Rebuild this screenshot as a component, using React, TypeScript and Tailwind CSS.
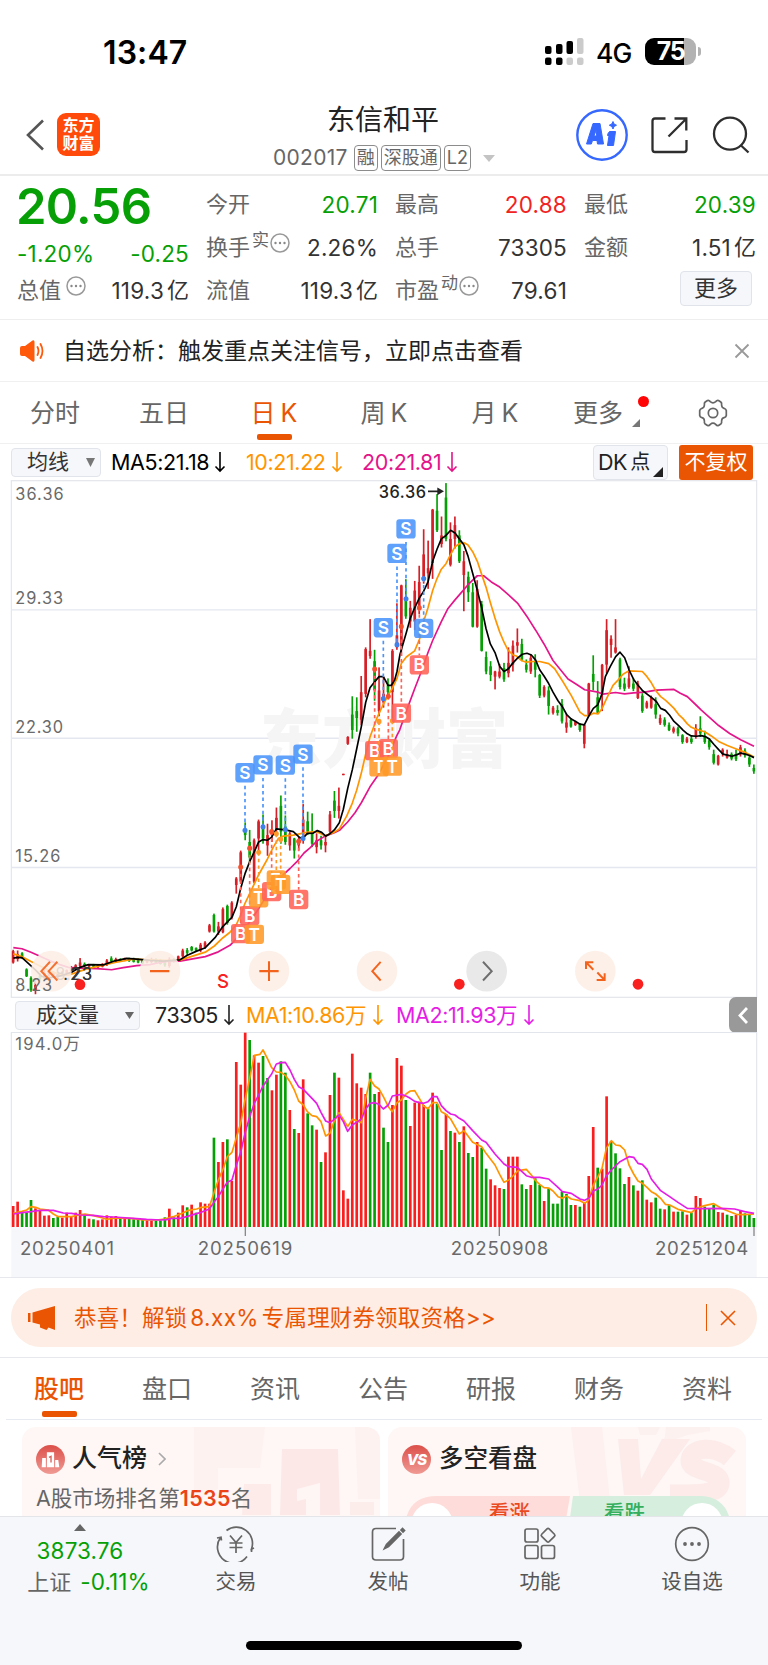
import type { ReactNode } from "react";

/* Chart data is stored in thirds of a pixel; every chart's viewBox uses the same unit. */
const STEP = 13.386;
const FIRST_X = 39.5;
const SPLIT = 1104;

const CANDLES =
  "R1393,1397,1430,1433 R1395,1405,1420,1427 G1400,1403,1415,1420 G1447,1450,1470,1472 G1470,1475,1510,1515 R1475,1495,1510,1522 G1462,1468,1478,1482 R1450,1460,1474,1478 R1452,1456,1468,1470 R1455,1458,1470,1472 R1458,1460,1472,1474 R1455,1458,1466,1468 R1450,1452,1460,1462 R1440,1444,1455,1458 R1435,1438,1450,1452 R1417,1430,1440,1445 G1430,1434,1440,1445 R1436,1438,1442,1444 G1434,1436,1442,1444 R1436,1438,1444,1446 R1432,1434,1442,1444 R1420,1424,1436,1440 G1412,1418,1426,1430 R1416,1420,1428,1430 G1418,1420,1425,1427 R1416,1418,1424,1426 G1416,1418,1426,1428 G1416,1418,1428,1430 G1418,1420,1430,1432 G1420,1422,1432,1434 R1420,1422,1430,1432 R1416,1420,1428,1432 G1418,1420,1432,1434 G1420,1422,1434,1436 G1426,1428,1438,1442 R1415,1420,1440,1445 G1418,1420,1428,1430 R1410,1412,1422,1425 R1390,1395,1412,1415 G1388,1394,1402,1408 G1382,1385,1395,1398 G1386,1388,1396,1398 R1373,1378,1395,1400 R1368,1372,1385,1390 R1318,1322,1340,1343 G1288,1292,1340,1343 R1312,1325,1340,1350 R1270,1275,1342,1345 G1262,1266,1315,1320 R1252,1256,1298,1305 R1182,1186,1205,1230 R1105,1110,1195,1202 G1023,1045,1060,1075 G1045,1080,1125,1140 R1070,1075,1195,1200 R1015,1020,1070,1115 G1000,1035,1070,1085 R1027,1060,1090,1120 R1017,1045,1060,1080 R980,1010,1045,1055 G945,975,1050,1085 G1003,1035,1080,1088 R1050,1055,1090,1105 G1068,1070,1105,1128 R1065,1075,1090,1105 R970,1015,1060,1085 G992,1020,1050,1060 G997,1050,1085,1095 R1055,1075,1095,1113 G1062,1075,1090,1102 R1060,1080,1090,1110 R990,1000,1050,1055 G932,960,990,1010 R922,975,990,1012 R882,882,886,886 R773,775,795,798 G657,710,755,780 G660,700,720,760 R598,645,725,740 R515,520,650,660 R433,525,540,548 G522,555,640,670 R573,640,700,715 R600,650,675,690 G605,625,645,655 R520,525,645,725 R387,480,515,522 R333,335,510,540 G317,375,425,432 R380,400,440,458 R322,350,440,465 R278,325,405,418 R172,245,320,330 R205,285,300,345 R113,115,270,316 G70,118,175,180 R135,190,215,225 G38,80,200,207 R152,200,275,280 R135,160,200,228 G175,190,265,270 R235,265,305,410 G295,310,355,383 G328,355,455,457 R320,345,455,458 G380,390,525,527 G527,543,585,593 G555,570,595,613 R583,585,600,637 R563,585,600,605 G560,575,608,615 R515,560,590,602 R495,510,565,585 R460,500,510,530 G490,505,550,555 G550,565,580,588 R535,545,585,592 G535,555,580,602 G592,595,655,662 R625,630,655,660 G628,640,685,710 R685,690,705,710 G683,697,705,713 G665,680,730,736 R708,733,748,763 G720,725,745,748 R728,732,740,743 G735,738,755,760 R738,740,795,808 R618,620,712,715 G538,592,615,640 G613,660,705,708 R563,566,650,700 R433,465,565,590 R480,490,508,545 R433,515,530,533 G545,550,630,637 G603,620,635,642 R570,605,630,635 G605,620,635,642 R612,620,662,665 G648,655,700,705 R670,675,690,693 R655,660,690,693 G660,680,710,722 R710,720,735,740 G718,725,740,745 G733,740,755,758 R745,750,760,765 G745,750,765,773 G767,770,790,795 R775,780,790,793 G770,780,790,795 R738,750,775,780 G715,750,765,775 G757,775,790,795 G778,785,805,812 G812,825,850,855 R827,830,855,858 R808,812,825,832 R812,825,835,838 G820,825,838,843 G812,825,840,845 R798,805,825,832 G808,815,828,835 G825,835,855,862 G855,865,875,882";

const VOLUMES =
  "R648 R635 G668 G667 G630 R655 R663 R677 R676 G684 G680 R683 R668 R678 R668 R660 G676 R686 G688 R691 R688 R676 R680 R678 G684 R686 G687 G688 G688 G690 R691 R692 G692 G691 G682 R656 G682 R668 R646 G652 R644 G668 R637 R641 R641 G443 R516 R456 G448 R573 R216 R284 R128 G150 R196 R218 G198 G264 R301 R254 G214 G248 R360 G417 R429 R268 G370 G406 R419 G516 R487 R315 G248 R263 R601 R626 R191 R280 R293 R312 G248 G312 R306 G413 G456 R345 R204 R227 G330 R408 R338 R335 R345 G356 R308 G342 G480 R372 G423 R428 G456 R409 G489 G501 R456 G473 G536 R568 R586 R594 G597 R500 R500 R500 G583 G597 R585 G565 G585 R633 G595 G641 G641 G605 G612 G645 R645 G650 R639 R558 R411 G533 R536 R319 G454 G490 G535 G582 R561 G586 R602 G571 R629 R637 G623 G656 R658 G646 R665 G665 G664 R674 G668 R618 R624 G650 G655 G645 R666 R668 G674 G678 R675 R662 G670 G675 G684";

type Line = { left: string; right: string; color: string };

const PRICE_LINES: Line[] = [
  {
    color: "#e4148a",
    left: "40,1387 66,1390 93,1400 120,1412 150,1425 180,1436 205,1444 240,1446 290,1448 335,1451 370,1445 410,1439 450,1436 480,1430 500,1427 540,1426 616,1413 655,1399 690,1380 710,1360 740,1325 775,1275 810,1220 850,1175 870,1157 890,1138 912,1112 930,1097 950,1078 975,1063 1003,1053 1020,1045 1043,1022 1065,995 1084,966 1110,920 1135,885 1165,830 1190,772",
    right: "95,755 115,700 140,635 160,585 180,530 194,495 220,440 240,402 261,377 285,350 300,333 328,307 347,307 370,325 395,340 420,361 450,388 480,430 503,465 528,505 555,553 575,577 600,607 625,622 650,638 690,645 705,651 743,646 770,650 797,647 830,645 865,639 918,637 937,648 958,658 985,683 1000,697 1052,742 1085,765 1118,783 1158,802",
  },
  {
    color: "#ff9500",
    left: "40,1405 66,1413 93,1427 120,1440 150,1455 180,1465 205,1467 240,1455 270,1446 310,1438 345,1430 400,1420 450,1422 500,1424 540,1423 575,1412 616,1400 643,1382 669,1358 690,1342 710,1318 722,1292 735,1258 749,1230 776,1175 802,1130 820,1095 835,1070 850,1063 880,1060 920,1052 950,1050 975,1062 1000,1053 1018,1042 1040,1005 1057,967 1070,930 1084,880 1097,825 1110,775 1130,722 1150,680 1164,655 1178,632 1191,605",
    right: "100,562 115,543 140,525 155,490 167,440 180,400 194,350 207,315 220,288 234,272 248,245 261,223 274,214 288,211 300,218 314,237 328,265 341,303 354,340 367,385 381,430 395,470 408,500 420,523 435,537 445,540 460,553 475,558 495,556 515,556 542,562 560,577 583,612 610,655 636,703 650,713 663,713 676,706 690,708 702,693 715,665 735,625 750,610 765,593 783,583 823,585 837,600 850,618 863,640 878,658 892,668 905,680 918,692 932,710 945,722 958,737 970,747 985,753 1010,760 1030,772 1052,788 1078,800 1105,810 1132,820 1158,833",
  },
  {
    color: "#000000",
    left: "40,1417 53,1415 66,1416 80,1428 107,1452 125,1470 150,1474 185,1468 215,1458 240,1444 265,1436 310,1437 345,1425 380,1418 410,1420 450,1424 490,1426 540,1422 562,1409 590,1397 616,1387 645,1358 669,1325 696,1298 709,1268 722,1215 735,1172 750,1135 763,1108 776,1080 789,1073 802,1075 815,1066 829,1042 856,1045 880,1050 900,1068 912,1066 922,1055 940,1054 952,1047 965,1052 977,1063 990,1056 1003,1045 1018,1024 1030,985 1043,925 1057,870 1070,810 1084,745 1097,675 1110,632 1124,615 1137,600 1150,600 1164,625 1174,625 1184,610 1191,585 1200,535",
    right: "100,522 115,472 127,430 140,400 155,370 167,352 180,325 194,265 207,230 220,200 234,190 248,175 261,183 274,200 288,218 300,250 314,300 328,350 341,400 354,460 367,505 381,530 395,570 408,585 420,578 435,560 450,545 463,535 477,532 490,537 503,552 515,580 528,598 542,620 555,645 570,670 583,687 596,710 610,723 623,730 636,738 649,740 662,715 676,692 689,682 702,650 712,600 727,570 743,542 756,529 770,545 783,580 797,608 810,625 823,640 850,660 865,672 878,692 892,698 905,712 918,730 932,742 945,755 958,766 970,772 985,773 1000,771 1012,774 1025,782 1038,797 1052,812 1065,825 1078,828 1092,831 1105,827 1118,822 1132,825 1145,829 1158,835",
  },
];

const VOLUME_LINES: Line[] = [
  {
    color: "#ff9500",
    left: "40,670 66,664 80,660 93,650 107,652 120,657 145,660 160,672 175,680 215,680 235,675 255,672 280,677 305,683 320,688 345,684 400,686 430,690 470,690 494,687 520,680 550,668 562,662 590,657 605,652 628,650 643,605 655,570 670,535 682,500 696,487 709,443 722,400 735,330 749,265 763,196 780,193 789,180 802,205 815,233 829,246 843,247 856,256 870,275 883,300 896,333 910,345 922,365 936,377 950,380 963,395 977,438 990,430 1003,392 1017,368 1030,388 1043,410 1057,388 1070,392 1084,398 1097,325 1110,268 1124,288 1137,297 1150,320 1165,350 1177,365",
    right: "87,338 100,330 114,312 127,303 140,302 154,325 167,348 180,356 194,338 207,338 220,365 234,373 248,387 261,410 274,432 288,422 300,438 314,457 341,470 354,490 381,525 395,553 408,577 422,570 435,558 450,542 475,538 490,555 503,572 515,583 528,593 542,594 555,603 570,620 583,625 596,618 610,627 636,632 650,640 662,630 676,585 690,560 702,535 715,475 730,452 743,465 756,467 770,480 783,525 797,552 810,573 823,580 837,592 850,605 863,612 878,625 892,643 905,645 930,658 970,668 985,655 1010,647 1037,641 1060,655 1078,662 1105,673 1130,674 1158,672",
  },
  {
    color: "#e51de5",
    left: "40,672 66,668 93,665 120,661 160,661 190,669 215,670 240,675 280,676 310,680 340,681 400,685 440,688 480,690 500,689 515,685 540,685 560,680 600,668 628,657 643,635 655,620 670,595 682,577 696,570 709,525 722,488 735,430 749,380 763,340 776,315 789,288 802,270 815,252 829,222 843,218 856,217 870,240 883,268 896,290 910,298 936,325 950,340 963,367 977,393 990,398 1003,388 1017,375 1030,395 1043,424 1057,405 1070,397 1084,387 1097,358 1110,340 1124,338 1137,343 1150,357 1165,345 1177,318",
    right: "100,313 114,318 127,325 140,334 154,338 167,340 180,335 194,320 207,320 220,347 234,362 248,372 261,375 274,385 288,393 314,422 341,450 354,457 381,492 408,522 422,530 448,532 475,557 490,562 515,562 542,567 570,592 583,605 610,610 636,627 650,631 662,625 676,603 690,597 702,585 715,558 730,540 756,515 783,500 797,502 810,520 823,523 837,538 850,567 878,602 905,620 930,637 958,655 1000,656 1060,655 1100,657 1130,665 1158,670",
  },
];

const joinLine = ({ left, right }: Line) =>
  left +
  " " +
  right
    .split(" ")
    .map((p) => {
      const [x, y] = p.split(",").map(Number);
      return `${x + SPLIT},${y}`;
    })
    .join(" ");

type Mark = [kind: "S" | "B" | "T", x: number, y: number, dotY: number];
const MARKS: Mark[] = [
  ["B", 722, 1346, 1153], ["B", 749, 1294, 1098], ["T", 763, 1348, 1348],
  ["T", 776, 1242, 1110], ["B", 815, 1224, 1050], ["T", 829, 1190, 1056],
  ["T", 842, 1203, 1072], ["B", 896, 1247, 1078], ["S", 735, 879, 1046],
  ["S", 789, 856, 1036], ["S", 856, 857, 1044], ["S", 909, 825, 1070],
  ["B", 1124, 815, 578], ["B", 1165, 809, 657], ["T", 1137, 862, 730],
  ["T", 1177, 860, 728], ["B", 1204, 706, 454], ["B", 1258, 566, 400],
  ["S", 1150, 458, 664], ["S", 1191, 242, 507], ["S", 1218, 171, 374],
  ["S", 1271, 460, 315],
];
const MARK_COLOR = { S: "#4a94fb", B: "#ff6257", T: "#ff9a28" };
const DOT_COLOR = { S: "#3f82ea", B: "#f4512c", T: "#ff9a28" };

function PriceChart() {
  return (
    <svg viewBox="0 29 2304 1504" preserveAspectRatio="none" className="block h-[518px] w-[768px]" fontFamily="Inter, 'Noto Sans CJK SC', sans-serif">
      <rect x="34" y="31" width="2236" height="1500" fill="none" stroke="#e3e5ec" strokeWidth="3.5" />
      <path d="M34 406H2270M34 779H2270M34 1154H2270" stroke="#e4e7ef" strokeWidth="4" />
      <path d="M1884 549H2270" stroke="#e6e8ec" strokeWidth="4" />
      <text x="780" y="848" fontSize="186" fontWeight="800" fill="#f5f5f6" textLength="744" fontFamily="'Noto Sans CJK SC', sans-serif">东方财富</text>
      <g fontSize="49" fill="#6a6a6a">
        <text x="46" y="86" textLength="145">36.36</text>
        <text x="46" y="388" textLength="143">29.33</text>
        <text x="46" y="764" textLength="143">22.30</text>
        <text x="46" y="1138" textLength="135">15.26</text>
      </g>
      {CANDLES.split(" ").map((c, i) => {
        const [hi, top, bottom, lo] = c.slice(1).split(",").map(Number);
        const x = FIRST_X + STEP * i;
        const fill = c[0] === "R" ? "#d62027" : "#06a006";
        return (
          <g key={i} fill={fill}>
            <rect x={x - 2.5} y={hi} width="5" height={lo - hi} />
            <rect x={x - 4} y={top} width="8" height={bottom - top} />
          </g>
        );
      })}
      {PRICE_LINES.map((l) => (
        <polyline key={l.color} points={joinLine(l)} fill="none" stroke={l.color} strokeWidth="5" strokeLinejoin="round" />
      ))}
      {MARKS.map(([k, x, y, dot], i) => (
        <g key={i}>
          {dot !== y && (
            <>
              <path d={dot > y ? `M${x} ${y + 38}V${dot}` : `M${x} ${dot}V${y - 28}`} stroke={MARK_COLOR[k]} strokeWidth="5" strokeDasharray="10 9" />
              <circle cx={x} cy={dot} r="7.5" fill={DOT_COLOR[k]} />
            </>
          )}
          <rect x={x - 29} y={y - 28} width="58" height="56" rx="9" fill={MARK_COLOR[k]} opacity="0.88" />
          <text x={x} y={y + 19} textAnchor="middle" fontSize="52" fontWeight="600" fill="#fff">{k}</text>
        </g>
      ))}
      <text x="1136" y="80" fontSize="49" fontWeight="500" fill="#222" textLength="142">36.36</text>
      <path d="M1284 62H1322" stroke="#222" strokeWidth="5" />
      <path d="M1312 51L1332 62L1312 73Z" fill="#222" />
      <text x="166" y="1481" fontSize="49" fill="#333" textLength="110">8.23</text>
      {[154, 480, 807, 1131, 1786].map((x) => (
        <ellipse key={x} cx={x} cy="1455" rx="61" ry="59" fill="#fdeee6" fillOpacity="0.88" />
      ))}
      <ellipse cx="1460" cy="1455" rx="61" ry="59" fill="#e9e9e9" />
      <text x="190" y="1481" fontSize="49" fill="#333" textLength="86">.23</text>
      <text x="46" y="1513" fontSize="49" fill="#6a6a6a" textLength="110">8.23</text>
      <g fill="none" stroke="#f2641e" strokeWidth="6">
        <path d="M150 1428L124 1455L150 1482M172 1428L146 1455L172 1482" opacity="0.9" />
        <path d="M450 1455H508M778 1455H836M807 1426V1484" />
        <path d="M1142 1428L1117 1455L1142 1482" />
        <path d="M1758 1449V1429H1780M1758 1429L1780 1451M1814 1461V1481H1790M1814 1481L1792 1459" />
      </g>
      <path d="M1449 1428L1475 1455L1449 1482" fill="none" stroke="#6e6e6e" strokeWidth="6" />
      <g fill="#f92020">
        <circle cx="240" cy="1494" r="16" />
        <circle cx="1378" cy="1493" r="16" />
        <circle cx="1914" cy="1493" r="16" />
        <text x="669" y="1505" textAnchor="middle" fontSize="56" fontWeight="500">S</text>
      </g>
    </svg>
  );
}

function VolumeChart() {
  return (
    <svg viewBox="0 126 2304 735" className="block h-[245px] w-[768px]" fontFamily="Inter, 'Noto Sans CJK SC', sans-serif">
      <rect x="34" y="711" width="2236" height="150" fill="#f6f7fb" />
      <path d="M34 712V127.500H2270V712" fill="none" stroke="#e3e5ec" strokeWidth="3.500" />
      <text x="46" y="181" fontSize="50" fill="#6a6a6a" textLength="194">194.0万</text>
      {VOLUMES.split(" ").map((v, i) => {
        const y = Number(v.slice(1));
        return <rect key={i} x={FIRST_X + STEP * i - 4} y={y} width="8" height={711 - y} fill={v[0] === "R" ? "#fa1e1e" : "#06a006"} />;
      })}
      {VOLUME_LINES.map((l) => (
        <polyline key={l.color} points={joinLine(l)} fill="none" stroke={l.color} strokeWidth="5" strokeLinejoin="round" />
      ))}
      <path d="M736 711V738M1498 711V738M2262 711V738" stroke="#8a8a8a" strokeWidth="4" />
      <g fontSize="56" fill="#6a6a6a">
        <text x="60" y="796" textLength="282">20250401</text>
        <text x="593" y="796" textLength="284">20250619</text>
        <text x="1352" y="796" textLength="293">20250908</text>
        <text x="1965" y="796" textLength="280">20251204</text>
      </g>
    </svg>
  );
}

function StatusBar() {
  return (
    <div className="flex h-[86px] items-start">
      <div className="ml-[103px] mt-[33px] w-[442px] text-[32px] font-semibold leading-[40px] tracking-[0.100px] text-black">13:47</div>
      <svg viewBox="0 0 40 28" className="mt-[38px] h-[28px] w-[40px]">
        <g fill="#000">
          <rect x="0" y="8" width="6.500" height="8" rx="2" /><rect x="11" y="6" width="6.500" height="10" rx="2" /><rect x="21.500" y="3" width="6.500" height="13" rx="2" />
          <rect x="0" y="19.500" width="6.500" height="7.500" rx="2" /><rect x="11" y="19.500" width="6.500" height="7.500" rx="2" />
        </g>
        <g fill="#cbcbcb">
          <rect x="32" y="0" width="6.500" height="16" rx="2" /><rect x="21.500" y="19.500" width="6.500" height="7.500" rx="2" /><rect x="32" y="19.500" width="6.500" height="7.500" rx="2" />
        </g>
      </svg>
      <div className="ml-[11px] mt-[37px] w-[49px] text-[26.500px] font-medium leading-[33px] tracking-[-1px] text-black">4G</div>
      <div className="mt-[38px] flex items-center">
        <div className="flex h-[27px] w-[51px] items-center justify-center rounded-[9px] bg-linear-to-r from-black from-76% to-[#b2b2b2] to-76% text-[25px] font-bold tracking-[-1.500px] text-white">75</div>
        <div className="ml-[2px] h-[9px] w-[3px] rounded-r-full bg-[#b2b2b2]" />
      </div>
    </div>
  );
}

function Tag({ children }: { children: ReactNode }) {
  return <span className="flex h-[26px] items-center rounded-[4px] border-[1.500px] border-[#8c8c8c] px-[2px] text-[18px] leading-none text-[#666]">{children}</span>;
}

function Header() {
  return (
    <div className="flex h-[90px] items-start border-b-2 border-[#ececec]">
      <svg viewBox="0 0 18 32" className="ml-[26px] mt-[33px] h-[32px] w-[18px]" fill="none" stroke="#555" strokeWidth="2.600"><path d="M17 1.500L2 16L17 30.500" /></svg>
      <div className="ml-[13px] mt-[27px] flex h-[43px] w-[43px] flex-col items-center justify-center rounded-[9px] bg-[#ff4a0b] text-[16px] font-bold leading-[17.500px] text-white">
        <span>东方</span><span>财富</span>
      </div>
      <div className="ml-[173px] flex w-[230px] flex-col">
        <div className="mt-[16px] text-center text-[28px] leading-[36px] text-[#222] -translate-x-[5px]">东信和平</div>
        <div className="mt-[7px] flex items-center gap-[3px]">
          <span className="mr-[3px] text-[21px] leading-[26px] tracking-[0.300px] text-[#666]">002017</span>
          <Tag>融</Tag><Tag>深股通</Tag><Tag>L2</Tag>
          <svg viewBox="0 0 12 7" className="ml-[9px] h-[7px] w-[12px]" fill="#c4c4c4"><path d="M0 0H12L6 7Z" /></svg>
        </div>
      </div>
      <svg viewBox="0 0 52 52" className="ml-[73px] mt-[23px] h-[52px] w-[52px]">
        <circle cx="26" cy="26" r="24.700" fill="none" stroke="#3668ff" strokeWidth="2.400" />
        <g fill="#3668ff" stroke="#3668ff" strokeLinejoin="round" strokeWidth="1">
          <path fillRule="evenodd" d="M17 14.500H24L27.500 35H21.500L21 31.500H16.500L15.300 35H10.500ZM18 27H20.700L20.200 21Z" />
          <path d="M33.500 22.500H39.500L37.500 36.500H31.500L33 26.500H31.500L32 24.500Z" />
          <path d="M37 12.500L38 15L40.500 16.200L38 17.500L37 20L35.800 17.500L33.300 16.200L35.800 15Z" />
        </g>
      </svg>
      <svg viewBox="0 0 38 38" className="ml-[22px] mt-[30px] h-[38px] w-[38px]" fill="none" stroke="#2e2e2e" strokeWidth="2.300">
        <path d="M15.500 2.500H5Q2.500 2.500 2.500 5V33.500Q2.500 36 5 36H34Q36.500 36 36.500 33.500V24" />
        <path d="M24.500 2.500H36.300V14.500M36 3L18.500 20.500" />
      </svg>
      <svg viewBox="0 0 40 40" className="ml-[22px] mt-[29px] h-[40px] w-[40px]" fill="none" stroke="#2e2e2e" strokeWidth="2.300">
        <circle cx="20" cy="18.700" r="16" /><path d="M30.500 30L38.500 37.500" />
      </svg>
    </div>
  );
}

function Info({ className = "" }: { className?: string }) {
  return (
    <svg viewBox="0 0 20 20" className={`h-[20px] w-[20px] ${className}`}>
      <circle cx="10" cy="10" r="9" fill="none" stroke="#999" strokeWidth="1.500" />
      <g fill="#888"><circle cx="5.500" cy="10" r="1.200" /><circle cx="10" cy="10" r="1.200" /><circle cx="14.500" cy="10" r="1.200" /></g>
    </svg>
  );
}

function Stat({ label, sup, info, value, unit, tone = "text-[#333]" }: { label: string; sup?: string; info?: boolean; value: string; unit?: string; tone?: string }) {
  return (
    <div className="flex h-[43px] items-center text-[22px] leading-[43px]">
      <span className="text-[#666]">{label}</span>
      {sup && <span className="-translate-y-[7px] pl-[2px] text-[17px] text-[#666]">{sup}</span>}
      {info && <Info className={sup ? "ml-[1px] -translate-y-[5px]" : "ml-[5px] -translate-y-[5px]"} />}
      <span className={`ml-auto text-[22.500px] tracking-[0.200px] ${tone}`}>{value}</span>
      {unit && <span className="pl-[3px] text-[#333]">{unit}</span>}
    </div>
  );
}

function Quote() {
  return (
    <div className="flex h-[144px] gap-[17px] border-b-[1.500px] border-[#eeeeee] pl-[17px] pr-[12px] pt-[7px] text-[22px]">
      <div className="w-[172px] text-[#06a006]">
        <div className="h-[49px] text-[49px] font-semibold leading-[48px] tracking-[-0.700px] -ml-[1px]">20.56</div>
        <div className="flex h-[37px] items-center justify-between text-[22.500px] leading-[37px] tracking-[0.200px]"><span className="mt-[5px]">-1.20%</span><span className="mt-[5px]">-0.25</span></div>
        <Stat label="总值" info value="119.3" unit="亿" />
      </div>
      <div className="w-[172px]">
        <Stat label="今开" value="20.71" tone="text-[#06a006]" />
        <Stat label="换手" sup="实" info value="2.26%" />
        <Stat label="流值" value="119.3" unit="亿" />
      </div>
      <div className="w-[172px]">
        <Stat label="最高" value="20.88" tone="text-[#f02323]" />
        <Stat label="总手" value="73305" />
        <Stat label="市盈" sup="动" info value="79.61" />
      </div>
      <div className="w-[172px]">
        <Stat label="最低" value="20.39" tone="text-[#06a006]" />
        <Stat label="金额" value="1.51" unit="亿" />
        <div className="ml-auto mr-[4px] mt-[2px] flex h-[35px] w-[72px] items-center justify-center rounded-[4px] border-[1.500px] border-[#e0e3ea] bg-[#f6f7fa] text-[22px] text-[#333]">更多</div>
      </div>
    </div>
  );
}

function Notice() {
  return (
    <div className="flex h-[62px] items-center border-b-[1.500px] border-[#f0f0f0] pl-[19px] pr-[18px]">
      <svg viewBox="0 0 26 24" className="h-[24px] w-[26px]">
        <path d="M1 9Q1 7 3 7H6L13.500 1.500Q15.500 .5 15.500 3V21Q15.500 23.500 13.500 22.500L6 17H3Q1 17 1 15Z" fill="#ff5a0c" />
        <path d="M18.500 8Q20.500 12 18.500 16M21.500 5Q25.500 12 21.500 19" fill="none" stroke="#ff5a0c" strokeWidth="1.800" strokeLinecap="round" />
      </svg>
      <div className="ml-[18px] flex-1 text-[23px] leading-[30px] text-[#222]">自选分析：触发重点关注信号，立即点击查看</div>
      <svg viewBox="0 0 16 16" className="h-[16px] w-[16px]" fill="none" stroke="#999" strokeWidth="1.800"><path d="M1.500 1.500L14.500 14.500M14.500 1.500L1.500 14.500" /></svg>
    </div>
  );
}

function PeriodTabs() {
  return (
    <div className="flex h-[62px] items-center border-b-[1.500px] border-[#f0f0f0] pt-[1px] text-[25px] leading-[34px] text-[#666]">
      <div className="w-[110px] text-center">分时</div>
      <div className="w-[108px] text-center">五日</div>
      <div className="relative w-[112px] text-center text-[#ea5504]">
        日<span className="pl-[5px]">K</span>
        <div className="absolute -bottom-[10px] left-[39px] h-[6px] w-[35px] rounded-[2px] bg-[#ea5504]" />
      </div>
      <div className="w-[108px] text-center">周<span className="pl-[5px]">K</span></div>
      <div className="w-[114px] text-center">月<span className="pl-[5px]">K</span></div>
      <div className="relative w-[92px] text-center">
        更多
        <div className="absolute right-[-5px] top-0 h-[11px] w-[11px] rounded-full bg-[#ff0505]" />
        <svg viewBox="0 0 8 8" className="absolute bottom-[3px] right-[4px] h-[8px] w-[8px]" fill="#777"><path d="M8 0V8H0Z" /></svg>
      </div>
      <svg viewBox="0 0 30 28" className="ml-[54px] h-[28px] w-[30px]" fill="none" stroke="#666" strokeWidth="1.700" strokeLinejoin="round">
        <path d="M9.500 1.500Q11 1 12.300 2.600Q15 5 17.700 2.600Q19 1 20.500 1.500L22.800 3Q24 4 23.600 6Q23.800 8.800 26 9.300Q28 10 28.300 11.500V16.500Q28 18 26 18.700Q23.800 19.200 23.600 22Q24 24 22.800 25L20.500 26.500Q19 27 17.700 25.400Q15 23 12.300 25.400Q11 27 9.500 26.500L7.200 25Q6 24 6.400 22Q6.200 19.200 4 18.700Q2 18 1.700 16.500V11.500Q2 10 4 9.300Q6.200 8.800 6.400 6Q6 4 7.200 3Z" />
        <circle cx="15" cy="14" r="4.700" />
      </svg>
    </div>
  );
}

function Arrow() {
  return <svg viewBox="0 0 12 22" className="h-[22px] w-[12px]" fill="none" stroke="currentColor" strokeWidth="1.600"><path d="M6 1V20M1.500 15.500L6 20L10.500 15.500" /></svg>;
}

function IndicatorRow() {
  return (
    <div className="flex h-[36px] items-center pl-[11px] text-[21.500px] leading-[28px] tracking-[-0.400px]">
      <div className="flex h-[29px] w-[90px] items-center rounded-[4px] border-[1.500px] border-[#e1e4ea] bg-[#f6f7fa] pl-[15px] text-[21px] tracking-normal text-[#333]">
        均线<svg viewBox="0 0 9 9" className="ml-[17px] h-[9px] w-[9px]" fill="#777"><path d="M0 0H9L4.500 9Z" /></svg>
      </div>
      <div className="ml-[10px] flex w-[135px] items-center gap-[5px] text-black"><span>MA5:21.18</span><Arrow /></div>
      <div className="flex w-[116px] items-center gap-[5px] text-[#ff9500]"><span>10:21.22</span><Arrow /></div>
      <div className="flex w-[231px] items-center gap-[5px] text-[#e4148a]"><span>20:21.81</span><Arrow /></div>
      <div className="relative flex h-[35px] w-[75px] items-center rounded-[4px] border-[1.500px] border-[#e1e4ea] bg-[#f6f7fa] pl-[4px] text-[#222]">
        DK<span className="pl-[3px] text-[20px]">点</span>
        <svg viewBox="0 0 10 10" className="absolute bottom-[2px] right-[4px] h-[10px] w-[10px]" fill="#222"><path d="M10 0V10H0Z" /></svg>
      </div>
      <div className="ml-[11px] flex h-[35px] w-[74px] items-center justify-center rounded-[3px] bg-[#ea5504] text-[21px] tracking-normal text-white">不复权</div>
    </div>
  );
}

function VolumeRow() {
  return (
    <div className="flex h-[34px] items-center pl-[15px] text-[21.500px] leading-[28px] tracking-[-0.400px]">
      <div className="flex h-[29px] w-[125px] items-center rounded-[4px] border-[1.500px] border-[#e1e4ea] bg-[#f6f7fa] pl-[20px] text-[21px] tracking-normal text-[#333]">
        成交量<svg viewBox="0 0 9 7" className="ml-[26px] h-[7px] w-[9px]" fill="#666"><path d="M0 0H9L4.500 7Z" /></svg>
      </div>
      <div className="ml-[15px] flex w-[91px] items-center gap-[5px] text-[#222]"><span>73305</span><Arrow /></div>
      <div className="flex w-[150px] items-center gap-[6px] text-[#ff9500]"><span>MA1:10.86万</span><Arrow /></div>
      <div className="flex w-[333px] items-center gap-[6px] text-[#e51de5]"><span>MA2:11.93万</span><Arrow /></div>
      <div className="flex h-[36px] w-[28px] items-center justify-center rounded-l-[7px] bg-[#999]">
        <svg viewBox="0 0 10 17" className="h-[17px] w-[10px]" fill="none" stroke="#fff" strokeWidth="2.800"><path d="M9 1L2 8.500L9 16" /></svg>
      </div>
    </div>
  );
}

function Banner() {
  return (
    <div className="flex h-[81px] items-center border-y-[1.500px] border-[#e6e8ee] px-[11px]">
      <div className="flex h-[59px] w-[746px] items-center rounded-full bg-[#fdede4] pl-[17px] pr-[21px] text-[22.500px] text-[#ea5504]">
        <svg viewBox="0 0 28 24" className="h-[24px] w-[28px]" fill="#ea5504"><path d="M0 7H2.500V16H0ZM4.500 6.500L27 0V24L20.500 21.500L18.500 24L12 21.500V18.500L4.500 16.500Z" /></svg>
        <span className="ml-[18px] tracking-[0.150px]">恭喜！解锁<span className="px-[3px] tracking-[0.400px]">8.xx%</span>专属理财券领取资格&gt;&gt;</span>
        <div className="ml-auto h-[27px] w-[1.500px] bg-[#ea5504]" />
        <svg viewBox="0 0 16 16" className="ml-[13px] h-[16px] w-[16px]" fill="none" stroke="#ea5504" strokeWidth="1.600"><path d="M1 1L15 15M15 1L1 15" /></svg>
      </div>
    </div>
  );
}

function SectionTabs() {
  return (
    <div className="mx-[6px] flex h-[62px] items-center border-b-[1.500px] border-[#e8eaf1] text-[25px] leading-[34px] text-[#666]">
      {["股吧", "盘口", "资讯", "公告", "研报", "财务", "资料"].map((t, i) => (
        <div key={t} className={`relative w-[108px] text-center ${i === 0 ? "font-medium text-[#ea5504]" : ""}`}>
          <span className="-ml-[2px]">{t}</span>
          {i === 0 && <div className="absolute -bottom-[11px] left-[36px] h-[6px] w-[35px] rounded-[2px] bg-[#ea5504]" />}
        </div>
      ))}
    </div>
  );
}

function Cards() {
  return (
    <div className="flex h-[96px] gap-[8px] overflow-hidden pl-[22px] pt-[7px]">
      <div className="relative h-[120px] w-[358px] rounded-[14px] bg-[#fef7f5] pl-[14px] pt-[17px]">
        <svg viewBox="0 0 358 88" className="absolute left-0 top-0 h-[88px] w-[358px]">
          <path d="M172 0H243L238 41H196V62L172 75Z" fill="#fdf2f0" />
          <path d="M333 0H345Q358 2 358 14V72H336Z" fill="#fdf2f0" />
          <path d="M222 57H249V88H220Z" fill="#fdebe9" />
          <path d="M260 22H316L318 88H258Z" fill="#fce9e7" />
          <path d="M328 75H352V88H328Z" fill="#fcecea" />
          <path d="M275 62L298 56V88H284V72L275 74Z" fill="#fef6f4" />
        </svg>
        <div className="relative flex items-center">
          <svg viewBox="0 0 28 28" className="h-[29px] w-[29px]">
            <defs><linearGradient id="coral" x1="0" y1="0" x2="0" y2="1"><stop offset="0" stopColor="#dc4f49" /><stop offset="1" stopColor="#f09a94" /></linearGradient></defs>
            <circle cx="14" cy="14" r="14" fill="url(#coral)" />
            <path d="M6 12.500H9.500V21.500H5.500ZM10.500 7H17.500V21.500H10.500ZM18.500 14.500H21.500L22.500 21.500H18.500Z" fill="#fff" />
            <path d="M12.500 12L14.500 11V17" fill="none" stroke="#dc605a" strokeWidth="1.300" />
          </svg>
          <span className="ml-[7px] -translate-y-px text-[25px] font-medium leading-[30px] text-[#222]">人气榜</span>
          <svg viewBox="0 0 8 14" className="ml-[11px] h-[14px] w-[8px]" fill="none" stroke="#aaa" strokeWidth="1.600"><path d="M1 1L7 7L1 13" /></svg>
        </div>
        <div className="relative mt-[10px] whitespace-nowrap text-[21.500px] leading-[28px] text-[#666]">A股市场排名第<span className="font-semibold tracking-[0.300px] text-[#ea4317]">1535</span>名</div>
      </div>
      <div className="relative h-[120px] w-[358px] rounded-[14px] bg-[#fef7f5] pl-[14px] pt-[17px]">
        <svg viewBox="0 0 358 88" className="absolute left-0 top-0 h-[88px] w-[358px]">
          <path d="M183 0H214L222 74H192Z" fill="#fdf0ee" />
          <path d="M250 0H272L268 8H252ZM278 0H322V4L300 8L276 16Z" fill="#fdf1ef" />
          <path d="M230 12H250L253 52L274 12H302L262 68H236Z" fill="#fcebe9" />
          <path d="M342 31C326 18 304 20 302 33C301 46 334 42 332 57C330 68 306 67 282 67" fill="none" stroke="#fcebe9" strokeWidth="19" />
        </svg>
        <div className="relative flex items-center">
          <svg viewBox="0 0 28 28" className="h-[29px] w-[29px]">
            <circle cx="14" cy="14" r="14" fill="url(#coral)" />
            <text x="14" y="19.500" textAnchor="middle" fontFamily="Inter, sans-serif" fontSize="14.500" fontWeight="800" fontStyle="italic" letterSpacing="-1" fill="#fff">VS</text>
          </svg>
          <span className="ml-[8px] -translate-y-px text-[24.500px] font-medium leading-[30px] text-[#222]">多空看盘</span>
        </div>
        <svg viewBox="0 0 326 30" className="absolute left-[17px] top-[68px] h-[30px] w-[326px]">
          <path d="M0 30Q3 1 32 1H165L160 30Z" fill="#fedcd9" />
          <path d="M168 1H296Q322 2 326 30H164Z" fill="#d5eedd" />
          <circle cx="27" cy="29" r="21" fill="#fff" /><circle cx="297" cy="29" r="21" fill="#fff" />
          <g fontFamily="'Noto Sans CJK SC', sans-serif" fontSize="20.500" fontWeight="500">
            <text x="84" y="25" fill="#ea4a1f">看涨</text><text x="199" y="25" fill="#35ae5e">看跌</text>
          </g>
        </svg>
      </div>
    </div>
  );
}

function NavItem({ label, children }: { label: string; children: ReactNode }) {
  return (
    <div className="flex w-[152px] flex-col items-center">
      <svg viewBox="0 0 40 36" className="mt-[9px] h-[36px] w-[40px]" fill="none" stroke="#666" strokeWidth="1.700">{children}</svg>
      <div className="mt-[6px] text-[20.500px] leading-[28px] text-[#555]">{label}</div>
    </div>
  );
}

function BottomNav() {
  return (
    <div className="relative flex h-[149px] border-t-[1.500px] border-[#e3e5e9] bg-[#f6f7fa]">
      <div className="flex w-[160px] flex-col items-center text-[22.500px] tracking-[0.100px] text-[#06a006]">
        <svg viewBox="0 0 12 7" className="mt-[7px] h-[7px] w-[12px]" fill="#666"><path d="M6 0L12 7H0Z" /></svg>
        <div className="mt-[5px] leading-[30px]">3873.76</div>
        <div className="mt-[1px] pl-[17px] leading-[30px]"><span className="mr-[9px] text-[22px] tracking-normal text-[#666]">上证</span>-0.11%</div>
      </div>
      <NavItem label="交易">
        <path d="M10.500 4.500A16.200 16.200 0 0 1 35.500 23L38 22M4.500 11.500A16.200 16.200 0 0 0 31 30.500M1 12L5 11.200L5.500 14.500M35.500 26L35.700 22.800" />
        <path d="M14 9.500L20 16.500L26 9.500M13.500 17H26.500M13.500 21.500H26.500M20 16.500V27" />
      </NavItem>
      <NavItem label="发帖">
        <path d="M28 2.500H8Q4.500 2.500 4.500 6V30.500Q4.500 34 8 34H32Q35.500 34 35.500 30.500V13" />
        <path d="M16.500 22.500L18.500 18.500L31 6L33 8L20.500 20.500ZM33 4L34.500 2.500L36.500 4.500L35 6Z" fill="#666" />
      </NavItem>
      <NavItem label="功能">
        <rect x="5" y="3" width="13" height="13" rx="2" /><rect x="5" y="19.500" width="13" height="13" rx="2" /><rect x="21.500" y="19.500" width="13" height="13" rx="2" />
        <rect x="22.800" y="4" width="10.500" height="10.500" rx="1.500" transform="rotate(45 28 9.300)" />
      </NavItem>
      <NavItem label="设自选">
        <circle cx="20" cy="18" r="16.300" />
        <g fill="#666" stroke="none"><circle cx="13" cy="18" r="1.900" /><circle cx="20" cy="18" r="1.900" /><circle cx="27" cy="18" r="1.900" /></g>
      </NavItem>
      <div className="absolute bottom-[15px] left-[246px] h-[9px] w-[276px] rounded-full bg-black" />
    </div>
  );
}

export default function App() {
  return (
    <div className="h-[1665px] w-[768px] overflow-hidden whitespace-nowrap bg-white font-[Inter,'Noto_Sans_CJK_SC',sans-serif]">
      <StatusBar />
      <Header />
      <Quote />
      <Notice />
      <PeriodTabs />
      <IndicatorRow />
      <PriceChart />
      <VolumeRow />
      <VolumeChart />
      <Banner />
      <SectionTabs />
      <Cards />
      <BottomNav />
    </div>
  );
}
